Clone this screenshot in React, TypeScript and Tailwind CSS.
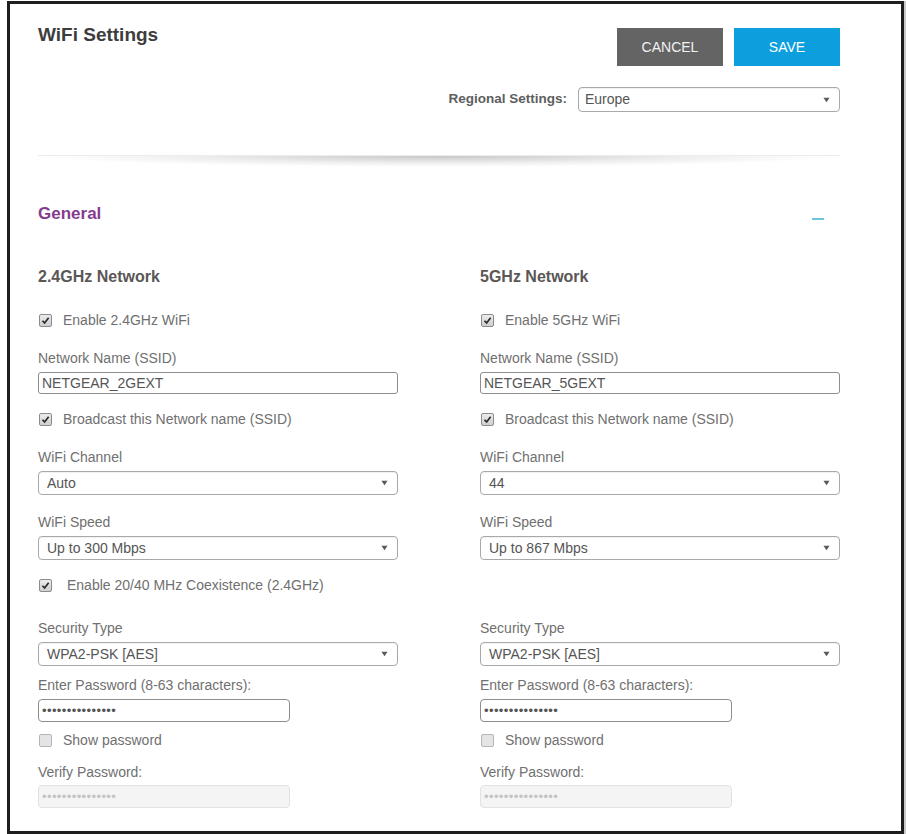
import type { ReactNode } from 'react'

const font = { fontFamily: '"Liberation Sans", Arial, sans-serif' }

function Check({ checked }: { checked?: boolean }) {
  return (
    <span
      className={`flex h-[13px] w-[13px] shrink-0 items-center justify-center rounded-[2px] border ${
        checked ? 'border-[#8c8c8c] bg-gradient-to-b from-[#ececec] to-[#cfcfcf]' : 'border-[#b5b5b5] bg-[#e4e4e4]'
      }`}
    >
      {checked && (
        <svg viewBox="0 0 10 10" className="h-[9px] w-[9px]" aria-hidden="true">
          <path d="M1.6 5.3 L4 7.7 L8.5 1.9" fill="none" stroke="#2a2a2a" strokeWidth="1.9" />
        </svg>
      )}
    </span>
  )
}

function CheckRow({ checked, gap = 'gap-[11px]', children }: { checked?: boolean; gap?: string; children: ReactNode }) {
  return (
    <label className={`flex h-5 items-center ${gap} pl-px text-[14px] leading-5 text-[#707070]`}>
      <Check checked={checked} />
      <span>{children}</span>
    </label>
  )
}

function Label({ children, className = '' }: { children: ReactNode; className?: string }) {
  return <div className={`h-5 text-[14px] leading-5 text-[#707070] ${className}`}>{children}</div>
}

function Arrow() {
  return (
    <svg viewBox="0 0 8 6" className="h-[6px] w-[7px]" aria-hidden="true">
      <path d="M0.5 0.5 H7.5 L4 5.5 Z" fill="#5a5a5a" />
    </svg>
  )
}

function Select({ value, className = '' }: { value: string; className?: string }) {
  return (
    <div
      className={`flex h-6 items-center justify-between rounded-[4px] border border-[#a9a9a9] bg-white pr-[9px] pl-2 text-[14px] text-[#555] shadow-[inset_0_1px_1px_rgba(0,0,0,0.06)] ${className}`}
    >
      <span>{value}</span>
      <Arrow />
    </div>
  )
}

function TextBox({ value, className = '' }: { value: string; className?: string }) {
  return (
    <div
      className={`flex h-[22px] items-center rounded-[3px] border border-[#8d8d8d] bg-white px-[3px] text-[14px] text-[#555] ${className}`}
    >
      {value}
    </div>
  )
}

function Dots({ disabled }: { disabled?: boolean }) {
  return (
    <div
      className={`flex h-[23px] w-[252px] items-center rounded-[4px] border px-[3px] text-[13px] tracking-[0.4px] ${
        disabled ? 'border-[#e2e2e2] bg-[#f4f4f4] text-[#c4c4c4]' : 'border-[#8d8d8d] bg-white text-[#555]'
      }`}
    >
      {'•'.repeat(15)}
    </div>
  )
}

type Band = {
  title: string
  enable: string
  ssid: string
  channel: string
  speed: string
  coexistence?: boolean
}

function BandColumn({ band }: { band: Band }) {
  return (
    <div className="flex w-[360px] flex-col">
      <h3 className="h-5 text-[16px] leading-5 font-bold text-[#5b5757]">{band.title}</h3>
      <div className="mt-[23px]">
        <CheckRow checked>{band.enable}</CheckRow>
      </div>
      <Label className="mt-[18px]">Network Name (SSID)</Label>
      <TextBox value={band.ssid} className="mt-1" />
      <div className="mt-[15px]">
        <CheckRow checked>Broadcast this Network name (SSID)</CheckRow>
      </div>
      <Label className="mt-[18px]">WiFi Channel</Label>
      <Select value={band.channel} className="mt-1" />
      <Label className="mt-[17px]">WiFi Speed</Label>
      <Select value={band.speed} className="mt-1" />
      <div className="mt-[15px] h-5">
        {band.coexistence && (
          <CheckRow checked gap="gap-[15px]">
            Enable 20/40 MHz Coexistence (2.4GHz)
          </CheckRow>
        )}
      </div>
      <Label className="mt-[23px]">Security Type</Label>
      <Select value="WPA2-PSK [AES]" className="mt-1" />
      <Label className="mt-[9px]">Enter Password (8-63 characters):</Label>
      <div className="mt-1">
        <Dots />
      </div>
      <div className="mt-2">
        <CheckRow>Show password</CheckRow>
      </div>
      <Label className="mt-3 text-[#8a8a8a]">Verify Password:</Label>
      <div className="mt-[3px]">
        <Dots disabled />
      </div>
    </div>
  )
}

const bands: Band[] = [
  {
    title: '2.4GHz Network',
    enable: 'Enable 2.4GHz WiFi',
    ssid: 'NETGEAR_2GEXT',
    channel: 'Auto',
    speed: 'Up to 300 Mbps',
    coexistence: true,
  },
  {
    title: '5GHz Network',
    enable: 'Enable 5GHz WiFi',
    ssid: 'NETGEAR_5GEXT',
    channel: '44',
    speed: 'Up to 867 Mbps',
  },
]

export default function App() {
  return (
    <div className="flex h-[834px] w-[906px] bg-white pt-px pl-[7px]" style={font}>
      <div className="h-[833px] w-[897px] border-[3px] border-[#1e1e1e] bg-white pt-[20px] pr-[61px] pl-[28px]">
        {/* header */}
        <div className="flex items-start justify-between">
          <h1 className="h-[22px] text-[19px] leading-[22px] font-bold text-[#3d3d3d]">WiFi Settings</h1>
          <div className="mt-1 flex flex-col items-end">
            <div className="flex gap-[11px]">
              <button
                type="button"
                className="h-[38px] w-[106px] bg-[#646464] text-[14px] text-[#f2f2f2]"
              >
                CANCEL
              </button>
              <button type="button" className="h-[38px] w-[106px] bg-[#0d9fdd] text-[14px] text-white">
                SAVE
              </button>
            </div>
            <div className="mt-[21px] flex items-center gap-[11px]">
              <span className="text-[13.5px] font-bold text-[#5e5e5e]">Regional Settings:</span>
              <div className="flex h-[25px] w-[262px] items-center justify-between rounded-[4px] border border-[#a9a9a9] pr-[9px] pl-[6px] text-[14px] text-[#555] shadow-[inset_0_1px_1px_rgba(0,0,0,0.06)]">
                <span>Europe</span>
                <Arrow />
              </div>
            </div>
          </div>
        </div>

        {/* divider with curved shadow */}
        <div className="mt-[43px] h-px bg-[#ececec]" />
        <div className="h-[11px] bg-[radial-gradient(50%_100%_at_50%_0%,rgba(0,0,0,0.22),rgba(0,0,0,0.07)_60%,transparent_100%)]" />

        <div className="mt-[37px] flex items-center justify-between">
          <h2 className="h-5 text-[17px] leading-5 font-bold text-[#863b8e]">General</h2>
          <span className="mt-[9px] mr-[16px] h-[2px] w-[12px] bg-[#6cc4e0]" />
        </div>

        <div className="mt-[43px] grid grid-cols-[442px_360px]">
          {bands.map((band) => (
            <BandColumn key={band.title} band={band} />
          ))}
        </div>
      </div>
      <div className="h-full flex-1 bg-[#c9c9c9]" />
    </div>
  )
}
